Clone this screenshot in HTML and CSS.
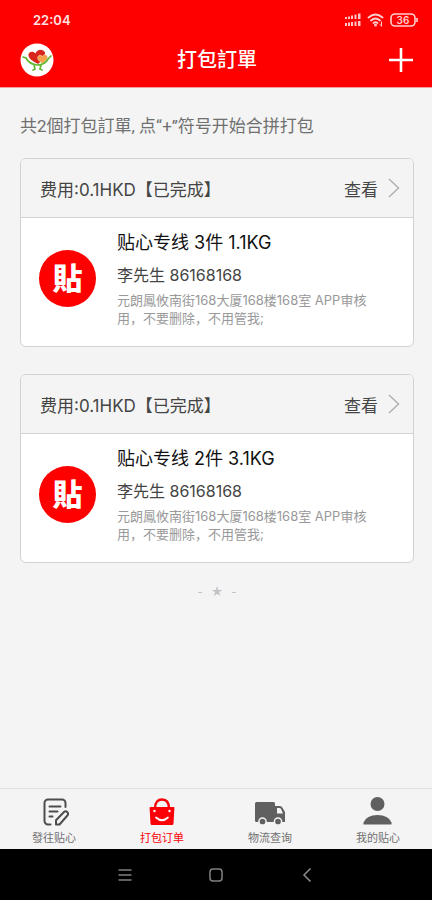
FILE: index.html
```html
<!DOCTYPE html>
<html lang="zh-Hans">
<head>
<meta charset="utf-8">
<meta name="viewport" content="width=device-width, initial-scale=1">
<title>打包訂單</title>
<link rel="stylesheet" href="styles.css">
</head>
<body>
<div class="app">
  <header class="top">
    <div class="status">
      <span class="time">22:04</span>
      <span class="status-icons">
        <svg width="18" height="14" viewBox="0 0 18 14" fill="#ffc4c4">
          <path d="M1 4h2v2H1zM4 3.500h2V6H4zM7 2.500h2V6H7zM10.500 1.500h2V6h-2zM14 .5h2.500V6H14zM1 10h2v3H1zM4 9.500h2V13H4zM7 9h2v4H7zM10.500 8.500h2V13h-2zM14 8h2.500v5H14z"/>
        </svg>
        <svg width="18" height="14" viewBox="0 0 18 14" fill="none" stroke="#ffd0d0" stroke-width="1.800" stroke-linecap="round">
          <path d="M1.500 4.500q7-6 14 0M4 7.500q4.500-4 9 0M6.500 10q2-1.800 4 0"/>
          <circle cx="8.500" cy="12" r=".6"/>
          <path d="M14.500 9v4M13 11.500l1.500 1.500" stroke-width="1"/>
        </svg>
        <svg width="28" height="14" viewBox="0 0 28 14" fill="none" stroke="#ffd0d0" stroke-width="1.600">
          <rect x="1" y="1" width="24" height="12" rx="4"/>
          <path d="M27 5v4"/>
          <text class="battery-text" x="13" y="10.500">36</text>
        </svg>
      </span>
    </div>
    <div class="titlebar">
      <a class="brand" href="#" aria-label="贴心">
        <svg width="34" height="34" viewBox="0 0 34 34">
          <circle cx="17" cy="17" r="16.500" fill="#fff"/>
          <path d="M18 21C12 18 8 15 8.500 11.500C9 8 13.500 8 15.500 10.500C17 6 23 5.500 25 9.500C25.500 14 22 18 18 21Z" fill="#d9261c"/>
          <path d="M22.500 20.500C18 17.500 17 15.500 18 13.500C19 11.500 21.500 12 22.500 13.500C23.500 11 27 11 27.500 13.500C28 16 25.500 18.500 22.500 20.500Z" fill="#f5a04a" stroke="#fff" stroke-width=".4"/>
          <path d="M3 14l3 1q3 6 11 7q8 0 11-6l3-3M14 22l1 4-2 1M21 22l-1 4 2 1" fill="none" stroke="#63b62f" stroke-width="1.700" stroke-linecap="round"/>
        </svg>
      </a>
      <h1 class="title">打包訂單</h1>
      <button class="add" type="button" aria-label="+">
        <svg width="26" height="26" viewBox="0 0 26 26" stroke="#fff" stroke-width="2.600"><path d="M13 1v24M1 13h24"/></svg>
      </button>
    </div>
  </header>

  <main class="content">
    <p class="intro">共2個打包訂單, 点“+”符号开始合拼打包</p>

    <div class="orders">
      <article class="card">
        <div class="card-head">
          <span>费用:0.1HKD【已完成】</span>
          <a class="view" href="#">查看
            <svg width="12" height="20" viewBox="0 0 12 20" fill="none" stroke="#b2b2b2" stroke-width="1.500"><path d="M1 1l9.500 9L1 19"/></svg>
          </a>
        </div>
        <div class="card-body">
          <span class="seal">貼</span>
          <div class="info">
            <h2 class="line">贴心专线 3件 1.1KG</h2>
            <p class="person">李先生 86168168</p>
            <p class="address">元朗鳳攸南街168大厦168楼168室 APP审核用，不要删除，不用管我;</p>
          </div>
        </div>
      </article>

      <article class="card">
        <div class="card-head">
          <span>费用:0.1HKD【已完成】</span>
          <a class="view" href="#">查看
            <svg width="12" height="20" viewBox="0 0 12 20" fill="none" stroke="#b2b2b2" stroke-width="1.500"><path d="M1 1l9.500 9L1 19"/></svg>
          </a>
        </div>
        <div class="card-body">
          <span class="seal">貼</span>
          <div class="info">
            <h2 class="line">贴心专线 2件 3.1KG</h2>
            <p class="person">李先生 86168168</p>
            <p class="address">元朗鳳攸南街168大厦168楼168室 APP审核用，不要删除，不用管我;</p>
          </div>
        </div>
      </article>
    </div>

    <p class="end"><span>-</span><span>★</span><span>-</span></p>
  </main>

  <nav class="tabs">
    <a class="tab" href="#">
      <svg width="30" height="30" viewBox="0 0 30 30" fill="none" stroke="#4d4d4d" stroke-width="2" stroke-linecap="round" stroke-linejoin="round">
        <path d="M11.500 27.500H9a3.500 3.500 0 0 1-3.500-3.500V6A3.500 3.500 0 0 1 9 2.500h14A3.500 3.500 0 0 1 26.500 6v4M10.500 9.500h11M10.500 14.500h8M10.500 19.500h3"/>
        <path d="M17 27.500v-4.200l8-8.300a2.200 2.200 0 0 1 3.200 0l.2.200a2.300 2.300 0 0 1 0 3.300L20.500 27.500Z"/>
      </svg>
      <span>發往贴心</span>
    </a>
    <a class="tab active" href="#" aria-current="page">
      <svg width="30" height="30" viewBox="0 0 30 30">
        <path d="M8 11.500C8 5 11 2.500 15 2.500S22 5 22 11.500" fill="none" stroke="#fb0007" stroke-width="2.400"/>
        <path d="M3.500 10h23q1 0 .9 1l-.9 15.500q-.1 1.500-1.500 1.500H5q-1.400 0-1.500-1.500L2.600 11q-.1-1 .9-1Z" fill="#fb0007"/>
        <path d="M9 20.500q6 5.500 12 0" fill="none" stroke="#fff" stroke-width="1.700" stroke-linecap="round"/>
        <circle cx="7.500" cy="14" r="1.200" fill="#fff"/><circle cx="22.500" cy="14" r="1.200" fill="#fff"/>
      </svg>
      <span>打包订单</span>
    </a>
    <a class="tab" href="#">
      <svg width="30" height="30" viewBox="0 0 30 30">
        <path d="M1.500 5h17q1.500 0 1.500 1.500V9h5q1.500 0 2.500 1.700l2.500 4.300V25H1.500Q0 25 0 23.500v-17Q0 5 1.500 5Z" fill="#606060"/>
        <path d="M22 11h2.500q1 0 1.500 1l2 4.500H22Z" fill="#f4f4f4"/>
        <circle cx="7.500" cy="24.500" r="3.600" fill="#606060" stroke="#f4f4f4" stroke-width="1.500"/>
        <circle cx="23" cy="24.500" r="3.600" fill="#606060" stroke="#f4f4f4" stroke-width="1.500"/>
      </svg>
      <span>物流查询</span>
    </a>
    <a class="tab" href="#">
      <svg width="30" height="30" viewBox="0 0 30 30" fill="#606060">
        <circle cx="14.500" cy="7" r="7"/>
        <path d="M.5 27.500v-2Q3.500 18 14.500 18T28.500 25.500v2Z"/>
      </svg>
      <span>我的贴心</span>
    </a>
  </nav>

  <div class="system">
    <button type="button" aria-label="Menu"><svg width="14" height="14" viewBox="0 0 14 14" stroke="#808080" stroke-width="1.500"><path d="M.5 2h13M.5 7h13M.5 12h13"/></svg></button>
    <button type="button" aria-label="Home"><svg width="14" height="14" viewBox="0 0 14 14" fill="none" stroke="#808080" stroke-width="1.500"><rect x="1" y="1" width="12" height="12" rx="3"/></svg></button>
    <button type="button" aria-label="Back"><svg width="14" height="14" viewBox="0 0 14 14" fill="none" stroke="#8c8c8c" stroke-width="1.500"><path d="M10.500.5L4 7l6.500 6.500"/></svg></button>
  </div>
</div>
</body>
</html>
```
FILE: styles.css
```css
* {
  box-sizing: border-box;
}

body {
  margin: 0;
  background: #f4f4f4;
  color: #444;
  font-family: Inter, "Noto Sans CJK SC", sans-serif;
}

h1, h2, p {
  margin: 0;
}

a {
  color: inherit;
  text-decoration: none;
}

button {
  display: flex;
  padding: 0;
  border: 0;
  background: none;
}

svg {
  display: block;
}

.app {
  display: flex;
  flex-direction: column;
  min-height: 100vh;
}

.top {
  background: #fe0000;
  color: #fff;
  border-bottom: 1px solid #f0a0a0;
}

.status {
  display: flex;
  justify-content: space-between;
  align-items: center;
  height: 40px;
  padding: 0 14px 0 33px;
}

.time {
  font-size: 13px;
  font-weight: 600;
  color: #ffe0e0;
}

.status-icons {
  display: flex;
  align-items: center;
  gap: 5px;
}

.battery-text {
  font-size: 10px;
  font-weight: 600;
  text-anchor: middle;
  fill: #ffd0d0;
  stroke: none;
}

.titlebar {
  display: grid;
  grid-template-columns: 1fr auto 1fr;
  align-items: center;
  height: 47px;
  padding: 0 18px 7px 20px;
}

.title {
  font-size: 20px;
  line-height: 28px;
  font-weight: 500;
}

.add {
  justify-self: end;
}

.content {
  flex: 1;
  padding: 24px 18px 0 20px;
}

.intro {
  margin-bottom: 18px;
  font-family: Roboto, "Noto Sans CJK SC", sans-serif;
  font-size: 17px;
  line-height: 28px;
  color: #707070;
}

.orders {
  display: flex;
  flex-direction: column;
  gap: 27px;
}

.card {
  border: 1px solid #d2d2d2;
  border-radius: 6px;
  background: #fff;
  overflow: hidden;
}

.card-head {
  display: flex;
  justify-content: space-between;
  align-items: center;
  height: 59px;
  padding: 0 13px 0 19px;
  border-bottom: 1px solid #d2d2d2;
  background: #f4f4f4;
  font-size: 17px;
}

.view {
  display: flex;
  align-items: center;
  gap: 10px;
}

.card-body {
  display: flex;
  align-items: center;
  gap: 21px;
  padding: 11px 32px 19px 18px;
}

.seal {
  display: flex;
  flex: none;
  align-items: center;
  justify-content: center;
  width: 57px;
  height: 57px;
  border-radius: 50%;
  background: #fe0000;
  color: #fff;
  font-size: 30px;
  line-height: 30px;
  font-weight: 900;
}

.line {
  font-size: 18px;
  line-height: 28px;
  font-weight: 400;
  color: #111;
}

.person {
  margin: 4px 0 2px;
  font-size: 16px;
  line-height: 28px;
  color: #444;
}

.address {
  font-size: 13px;
  line-height: 18px;
  color: #999;
}

.end {
  display: flex;
  justify-content: center;
  gap: 8px;
  margin-top: 19px;
  font-size: 12px;
  line-height: 20px;
  color: #c4c4c4;
}

.tabs {
  display: grid;
  grid-template-columns: repeat(4, 1fr);
  border-top: 1px solid #dedede;
  background: #f4f4f4;
}

.tab {
  display: flex;
  flex-direction: column;
  align-items: center;
  height: 60px;
  padding-top: 8px;
  gap: 3px;
  font-size: 11px;
  line-height: 16px;
  color: #707070;
}

.active {
  color: #fb0007;
}

.system {
  display: flex;
  justify-content: center;
  align-items: center;
  gap: 77px;
  height: 51px;
  background: #000;
}
```
